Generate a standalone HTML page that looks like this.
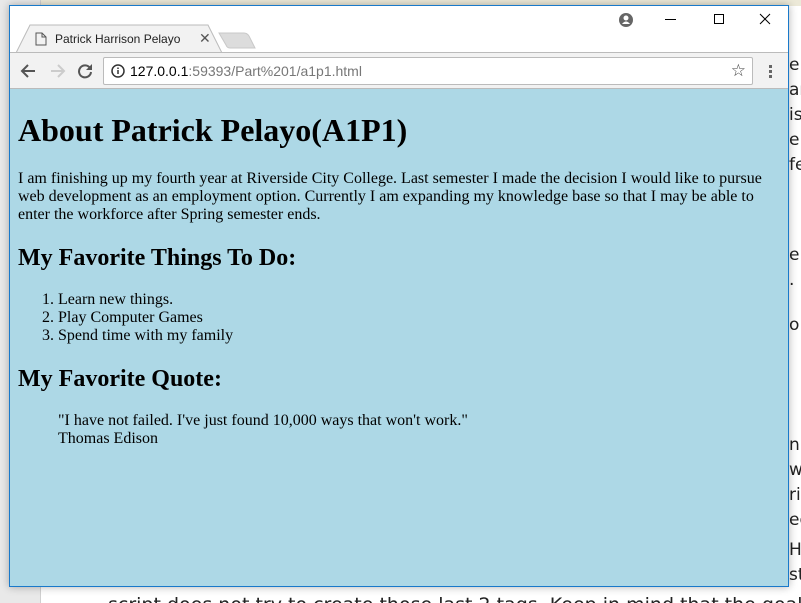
<!DOCTYPE html>
<html><head><style>
*{box-sizing:border-box}
html,body{margin:0;padding:0;width:801px;height:603px;overflow:hidden;background:#fff;position:relative;font-family:"Liberation Sans",sans-serif}
.clip{position:absolute;left:0;top:0;width:801px;height:603px;overflow:hidden}
.lgray{position:absolute;left:0;top:0;width:41px;height:603px;background:#e9e9e9;border-right:1px solid #d0d0d0}
.topbar{position:absolute;left:41px;top:0;width:760px;height:6px;background:#ece9d8}
.doc{position:absolute;left:108px;top:594px;font-size:19px;color:#222;white-space:nowrap;font-family:"DejaVu Sans",sans-serif}
.side{position:absolute;left:789px;font-size:17px;color:#222;font-family:"DejaVu Sans",sans-serif;white-space:nowrap}
.win{position:absolute;left:9px;top:5px;width:780px;height:582px;border:1px solid #1979ca;background:#fff;box-shadow:0 0 8px rgba(0,0,0,.3);overflow:hidden}
.tabstrip{position:absolute;left:0;top:0;width:778px;height:46px;background:#fff}
.tab{position:absolute;left:6px;top:18px;width:216px;height:29px;font-size:12px;color:#222}
.tab span{position:absolute;left:39px;top:8px}
.toolbar{position:absolute;left:0;top:46px;width:778px;height:37px;background:#f2f2f2;border-top:1px solid #bbb;border-bottom:1px solid #bbb}
.omni{position:absolute;left:93px;top:4px;width:650px;height:28px;background:#fff;border:1px solid #bbb;border-radius:2px;font-size:14px}
.page{position:absolute;left:0;top:83px;width:778px;height:498px;background:#add8e6;font-family:"Liberation Serif",serif;color:#000;padding:1px 8px;font-size:16px;line-height:18px}
h1{font-size:32px;margin:22px 0 21px;line-height:37px}
h2{font-size:24px;margin:20px 0 19px;line-height:28px}
p{margin:0 0 16px}
ol{margin:0;padding-left:40px}
blockquote{margin:16px 40px}
</style></head><body>
<div class="clip">
<div class="lgray"></div><div class="topbar"></div>
<div class="side" style="top:55px">e</div><div class="side" style="top:80px">ar</div><div class="side" style="top:105px">is</div><div class="side" style="top:130px">e</div><div class="side" style="top:155px">fe</div>
<div class="side" style="top:245px">e</div><div class="side" style="top:270px">.</div><div class="side" style="top:315px">o</div>
<div class="side" style="top:435px">n s</div><div class="side" style="top:460px">wr</div><div class="side" style="top:485px">rit</div><div class="side" style="top:510px">ed</div><div class="side" style="top:540px">H</div><div class="side" style="top:565px">sti</div>
<div class="doc">script does not try to create those last 2 tags. Keep in mind that the goal is for the p</div>
</div>
<div class="win">
<div class="tabstrip">
<div class="tab"><svg style="position:absolute;left:0;top:0" width="216" height="29"><path d="M0 29L14 1H192L206 29" fill="#f2f2f2" stroke="#bbb"/></svg><svg style="position:absolute;left:19px;top:8px" width="12" height="14"><path d="M1 1h6l4 4v8H1z M7 1v4h4" fill="none" stroke="#555"/></svg><span>Patrick Harrison Pelayo</span><span style="left:183px;top:6px;font-size:14px;color:#555">✕</span></div>
<svg style="position:absolute;left:208px;top:26px" width="40" height="18"><path d="M1 1H26Q29 1 31 4L37 16H12Q9 16 8 13Z" fill="#dcdcdc" stroke="#c8c8c8"/></svg>
<svg style="position:absolute;left:609px;top:7px" width="14" height="14"><circle cx="7" cy="7" r="7" fill="#666"/><circle cx="7" cy="5" r="2.5" fill="#fff"/><path d="M3 11q4-5 8 0" fill="#fff"/></svg>
<div style="position:absolute;left:655px;top:13px;width:11px;height:1px;background:#000"></div>
<div style="position:absolute;left:704px;top:8px;width:10px;height:10px;border:1px solid #000"></div>
<svg style="position:absolute;left:749px;top:7px" width="12" height="12"><path d="M1 1l10 10M11 1L1 11" stroke="#000"/></svg>
</div>
<div class="toolbar">
<svg style="position:absolute;left:10px;top:10px" width="16" height="16"><path d="M15 8H2M8 2L2 8l6 6" fill="none" stroke="#555" stroke-width="2"/></svg>
<svg style="position:absolute;left:40px;top:10px" width="16" height="16"><path d="M1 8h13M8 2l6 6-6 6" fill="none" stroke="#ccc" stroke-width="2"/></svg>
<svg style="position:absolute;left:67px;top:10px" width="16" height="16"><path d="M13 5A6 6 0 1 0 14 9" fill="none" stroke="#555" stroke-width="2"/><path d="M15 1v6H9z" fill="#555"/></svg>
<div class="omni"><svg style="position:absolute;left:7px;top:6px" width="14" height="14"><circle cx="7" cy="7" r="6" fill="none" stroke="#333" stroke-width="1.5"/><path d="M7 6v4M7 3.5v1.5" stroke="#333" stroke-width="1.5"/></svg><span style="position:absolute;left:26px;top:5px;color:#000">127.0.0.1<span style="color:#777">:59393/Part%201/a1p1.html</span></span><span style="position:absolute;right:6px;top:3px;font-size:17px;color:#444">☆</span></div>
<div style="position:absolute;left:759px;top:12px;width:3px;font-size:0"><div style="width:3px;height:3px;background:#666;margin-bottom:2px"></div><div style="width:3px;height:3px;background:#666;margin-bottom:2px"></div><div style="width:3px;height:3px;background:#666"></div></div>
</div>
<div class="page">
<h1>About Patrick Pelayo(A1P1)</h1>
<p>I am finishing up my fourth year at Riverside City College. Last semester I made the decision I would like to pursue web development as an employment option. Currently I am expanding my knowledge base so that I may be able to enter the workforce after Spring semester ends.</p>
<h2>My Favorite Things To Do:</h2>
<ol><li>Learn new things.</li><li>Play Computer Games</li><li>Spend time with my family</li></ol>
<h2>My Favorite Quote:</h2>
<blockquote>"I have not failed. I've just found 10,000 ways that won't work."<br>Thomas Edison</blockquote>
</div>
</div>
</body></html>
